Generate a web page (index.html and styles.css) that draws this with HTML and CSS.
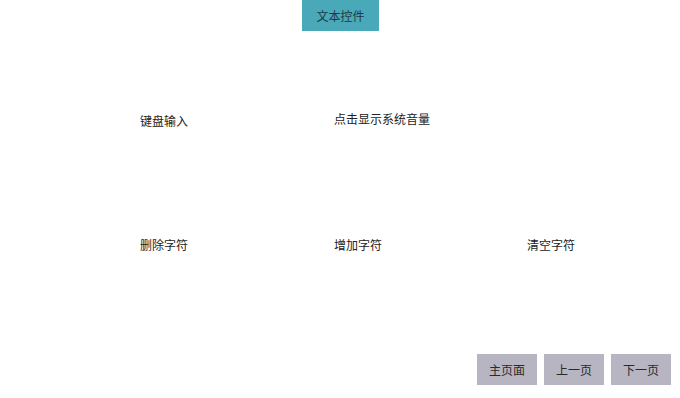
FILE: index.html
```html
<!DOCTYPE html>
<html>
<head>
    <title>文本控件</title>
    <link rel="stylesheet" href="styles.css">
</head>
<body>
    <div class="header">
        <div class="title">文本控件</div>
    </div>
    <div class="label-grid">
        <div class="label">键盘输入</div>
        <div class="label label-up">点击显示系统音量</div>
        <div class="label"></div>
        <div class="label">删除字符</div>
        <div class="label">增加字符</div>
        <div class="label">清空字符</div>
    </div>
    <div class="footer">
        <div class="nav-button">主页面</div>
        <div class="nav-button">上一页</div>
        <div class="nav-button">下一页</div>
    </div>
</body>
</html>
```

FILE: styles.css
```css
html, body {
    margin: 0;
    padding: 0;
}

body {
    width: 680px;
    height: 398px;
    background: #ffffff;
    font-family: "Noto Sans CJK SC", "Liberation Serif", serif;
    font-size: 12px;
    color: #222;
    display: flex;
    flex-direction: column;
    overflow: hidden;
}

.header {
    display: flex;
    justify-content: center;
    padding-left: 1px;
}

.title {
    width: 77px;
    height: 31px;
    background: #4aa9b9;
    color: #1d3a44;
    display: flex;
    align-items: center;
    justify-content: center;
}

.label-grid {
    display: grid;
    grid-template-columns: 194px 193px 150px;
    grid-template-rows: 124px 14px;
    padding-left: 140px;
    padding-top: 83px;
}

.label {
    line-height: 14px;
    white-space: nowrap;
}

.label-up {
    margin-top: -2px;
}

.footer {
    margin-top: auto;
    display: flex;
    justify-content: flex-end;
    gap: 7px;
    padding-right: 9px;
    padding-bottom: 13px;
}

.nav-button {
    width: 60px;
    height: 31px;
    background: #b7b5c1;
    color: #2a2a2a;
    display: flex;
    align-items: center;
    justify-content: center;
}
```
